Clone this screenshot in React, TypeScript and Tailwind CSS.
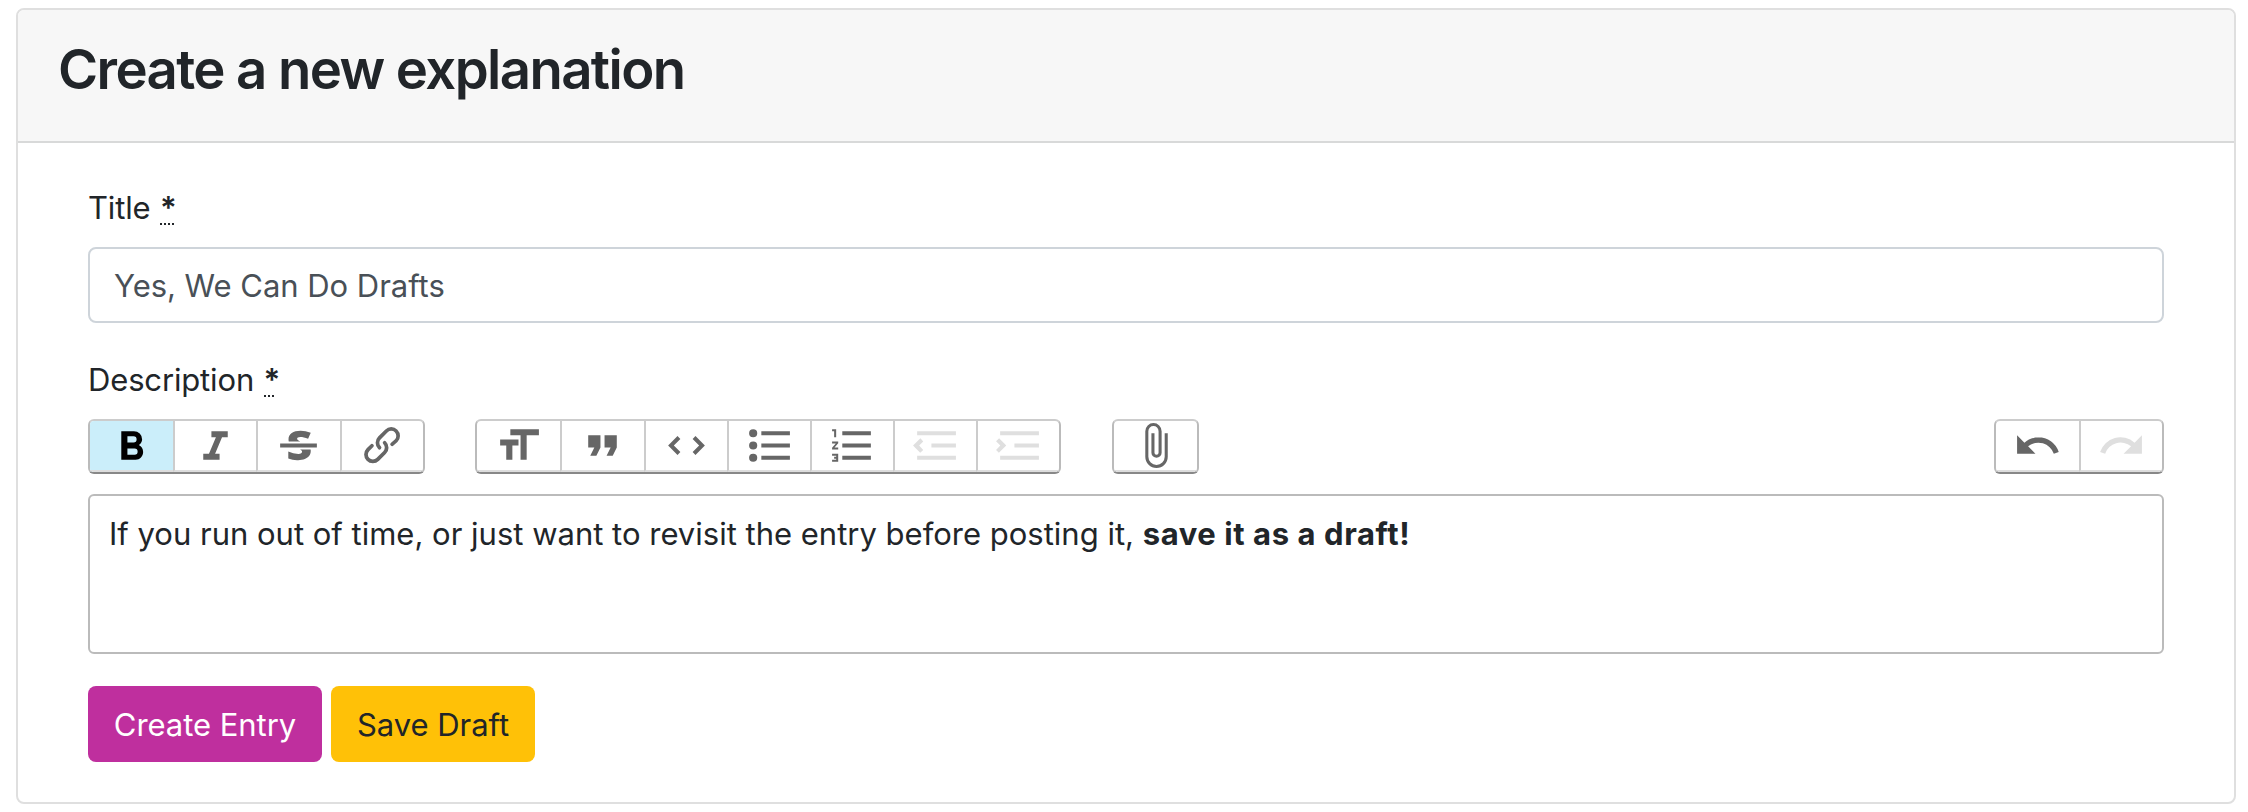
import { clsx } from 'clsx';

type Tool = { name: string; paths: string[]; active?: boolean; disabled?: boolean };

const textTools: Tool[] = [
  {
    name: 'Bold',
    active: true,
    paths: [
      'M15.6 11.8c1-.7 1.6-1.8 1.6-2.8a4 4 0 0 0-4-4H7v14h7c2.1 0 3.7-1.7 3.7-3.8 0-1.5-.8-2.8-2.1-3.4zM10 7.5h3a1.5 1.5 0 1 1 0 3h-3v-3zm3.5 9H10v-3h3.5a1.5 1.5 0 1 1 0 3z',
    ],
  },
  { name: 'Italic', paths: ['M10 5v3h2.2l-3.4 8H6v3h8v-3h-2.2l3.4-8H18V5h-8z'] },
  {
    name: 'Strikethrough',
    paths: [
      'M12.73 14l.28.14c.26.15.45.3.57.44.12.14.18.3.18.5 0 .3-.15.56-.44.75-.3.2-.76.3-1.39.3A13.52 13.52 0 0 1 7 14.95v3.37a10.64 10.64 0 0 0 4.84.88c1.26 0 2.35-.19 3.28-.56.93-.37 1.64-.9 2.14-1.57s.74-1.45.74-2.32c0-.26-.02-.51-.06-.75h-5.21zm-5.5-4c-.08-.34-.12-.7-.12-1.1 0-1.29.52-2.3 1.58-3.02 1.05-.72 2.5-1.08 4.34-1.08 1.62 0 3.28.34 4.97 1l-1.3 2.93c-1.47-.6-2.73-.9-3.8-.9-.55 0-.96.08-1.2.26-.26.17-.38.38-.38.64 0 .27.16.52.48.74.17.12.53.3 1.05.53H7.23zM3 13h18v-2H3v2z',
    ],
  },
  {
    name: 'Link',
    paths: [
      'M9.88 13.7a4.3 4.3 0 0 1 0-6.07l3.37-3.37a4.26 4.26 0 0 1 6.07 0 4.3 4.3 0 0 1 0 6.06l-1.96 1.72a.91.91 0 1 1-1.3-1.3l1.97-1.71a2.46 2.46 0 0 0-3.48-3.48l-3.38 3.37a2.46 2.46 0 0 0 0 3.48.91.91 0 1 1-1.3 1.3z',
      'M4.25 19.46a4.3 4.3 0 0 1 0-6.07l1.93-1.9a.91.91 0 1 1 1.3 1.3l-1.93 1.9a2.46 2.46 0 0 0 3.48 3.48l3.37-3.38c.96-.96.96-2.52 0-3.48a.91.91 0 1 1 1.3-1.3 4.3 4.3 0 0 1 0 6.07l-3.38 3.38a4.26 4.26 0 0 1-6.07 0z',
    ],
  },
];

const blockTools: Tool[] = [
  { name: 'Heading', paths: ['M12 9v3H9v7H6v-7H3V9h9zM8 4h14v3h-6v12h-3V7H8V4z'] },
  { name: 'Quote', paths: ['M6 17h3l2-4V7H5v6h3zm8 0h3l2-4V7h-6v6h3z'] },
  {
    name: 'Code',
    paths: [
      'M18.2 12L15 15.2l1.4 1.4L21 12l-4.6-4.6L15 8.8l3.2 3.2zM5.8 12L9 8.8 7.6 7.4 3 12l4.6 4.6L9 15.2 5.8 12z',
    ],
  },
  {
    name: 'Bullets',
    paths: [
      'M4 4a2 2 0 1 0 0 4 2 2 0 0 0 0-4zm0 6a2 2 0 1 0 0 4 2 2 0 0 0 0-4zm0 6a2 2 0 1 0 0 4 2 2 0 0 0 0-4zm4 3h14v-2H8v2zm0-6h14v-2H8v2zm0-8v2h14V5H8z',
    ],
  },
  {
    name: 'Numbers',
    paths: [
      'M2 17h2v.5H3v1h1v.5H2v1h3v-4H2v1zm1-9h1V4H2v1h1v3zm-1 3h1.8L2 13.1v.9h3v-1H3.2L5 10.9V10H2v1zm5-6v2h14V5H7zm0 14h14v-2H7v2zm0-6h14v-2H7v2z',
    ],
  },
  {
    name: 'Decrease level',
    disabled: true,
    paths: ['M3 19h19v-2H3v2zm7-6h12v-2H10v2zm-8.3-.3l2.8 2.9L6 14.2 4 12l2-2-1.4-1.5L1 12l.7.7zM3 5v2h19V5H3z'],
  },
  {
    name: 'Increase level',
    disabled: true,
    paths: ['M3 19h19v-2H3v2zm7-6h12v-2H10v2zm-6.9-1L1 14.2l1.4 1.4L6 12l-.7-.7-2.8-2.8L1 9.9 3.1 12zM3 5v2h19V5H3z'],
  },
];

const fileTools: Tool[] = [
  {
    name: 'Attach files',
    paths: [
      'M16.5 6v11.5a4 4 0 1 1-8 0V5a2.5 2.5 0 0 1 5 0v10.5a1 1 0 1 1-2 0V6H10v9.5a2.5 2.5 0 0 0 5 0V5a4 4 0 1 0-8 0v12.5a5.5 5.5 0 0 0 11 0V6h-1.5z',
    ],
  },
];

const historyTools: Tool[] = [
  {
    name: 'Undo',
    paths: ['M12.5 8c-2.6 0-5 1-6.9 2.6L2 7v9h9l-3.6-3.6A8 8 0 0 1 20 16l2.4-.8a10.5 10.5 0 0 0-10-7.2z'],
  },
  {
    name: 'Redo',
    disabled: true,
    paths: ['M18.4 10.6a10.5 10.5 0 0 0-16.9 4.6L4 16a8 8 0 0 1 12.7-3.6L13 16h9V7l-3.6 3.6z'],
  },
];

function ToolGroup({ tools }: { tools: Tool[] }) {
  return (
    <div className="flex h-[55px] overflow-hidden rounded-[6px] border-2 border-t-[#cccccc] border-r-[#bbbbbb] border-b-[#888888] border-l-[#bbbbbb]">
      {tools.map((tool, i) => (
        <button
          key={tool.name}
          type="button"
          aria-label={tool.name}
          disabled={tool.disabled}
          className={clsx(
            'flex h-[51px] w-[83.2px] shrink-0 items-center justify-center border-b-2 border-b-[#dddddd]',
            i > 0 && 'border-l-2 border-l-[#cccccc]',
            tool.active && 'bg-[#cbeefa]',
          )}
        >
          <svg
            viewBox="0 0 24 24"
            className={clsx(
              'size-[49px] shrink-0',
              tool.active ? 'fill-black' : tool.disabled ? 'fill-[#dfdfdf]' : 'fill-[#666666]',
            )}
          >
            {tool.paths.map((d) => (
              <path key={d} d={d} />
            ))}
          </svg>
        </button>
      ))}
    </div>
  );
}

function FieldLabel({ text, markClass }: { text: string; markClass: string }) {
  return (
    <label className="flex h-12 items-center text-[31px] leading-[50px] font-[430] tracking-[-0.15px]">
      <span>{text}</span>
      <abbr
        title="required"
        className={clsx(
          'ml-[9.5px] h-[50px] bg-[repeating-linear-gradient(to_right,#212529_0_2px,transparent_2px_4px)] bg-[length:100%_2px] bg-[position:0_40px] bg-no-repeat font-semibold whitespace-nowrap no-underline',
          markClass,
        )}
      >
        *
      </abbr>
    </label>
  );
}

export default function App() {
  return (
    <div className="h-[812px] bg-white px-4 pt-2 pr-3 font-['Inter','Liberation_Sans',sans-serif] text-[#212529]">
      <section className="h-[796px] overflow-hidden rounded-[8px] border-2 border-[#dfdfdf] bg-white">
        <header className="h-[133px] border-b-2 border-[#d8d9d9] bg-[#f7f7f7] px-10 pt-[26px]">
          <h2 className="text-[54.5px] leading-[67px] font-[580] tracking-[-1.6px]">Create a new explanation</h2>
        </header>
        <form className="flex flex-col px-[70px] pt-[41px]">
          <FieldLabel text="Title" markClass="w-[14px]" />
          <input
            type="text"
            defaultValue="Yes, We Can Do Drafts"
            className="mt-[15px] h-[76px] rounded-[8px] border-2 border-[#ced4da] px-6 pt-px text-[31px] font-[430] tracking-[-0.03px] text-[#495057]"
          />
          <div className="mt-[33px]">
            <FieldLabel text="Description" markClass="w-[12px]" />
          </div>
          <div className="mt-[15px] flex">
            <ToolGroup tools={textTools} />
            <div className="ml-[50.4px]">
              <ToolGroup tools={blockTools} />
            </div>
            <div className="ml-[50.4px]">
              <ToolGroup tools={fileTools} />
            </div>
            <div className="ml-auto">
              <ToolGroup tools={historyTools} />
            </div>
          </div>
          <div className="mt-5 h-[160px] rounded-[6px] border-2 border-[#bbbbbb] px-[19px] pt-[14px] text-[31px] leading-[48px] font-[430]">
            <span>If you run out of time, or just want to revisit the entry before posting it, </span>
            <strong className="font-bold tracking-[0.58px]">save it as a draft!</strong>
          </div>
          <div className="mt-8 flex gap-[9px] text-[31px] font-[430] tracking-[-0.05px]">
            <button type="button" className="h-[76px] w-[234px] rounded-[8px] bg-[#bf2f9e] pt-0.5 text-white">
              Create Entry
            </button>
            <button type="button" className="h-[76px] w-[204px] rounded-[8px] bg-[#ffc107] pt-0.5">
              Save Draft
            </button>
          </div>
        </form>
      </section>
    </div>
  );
}
